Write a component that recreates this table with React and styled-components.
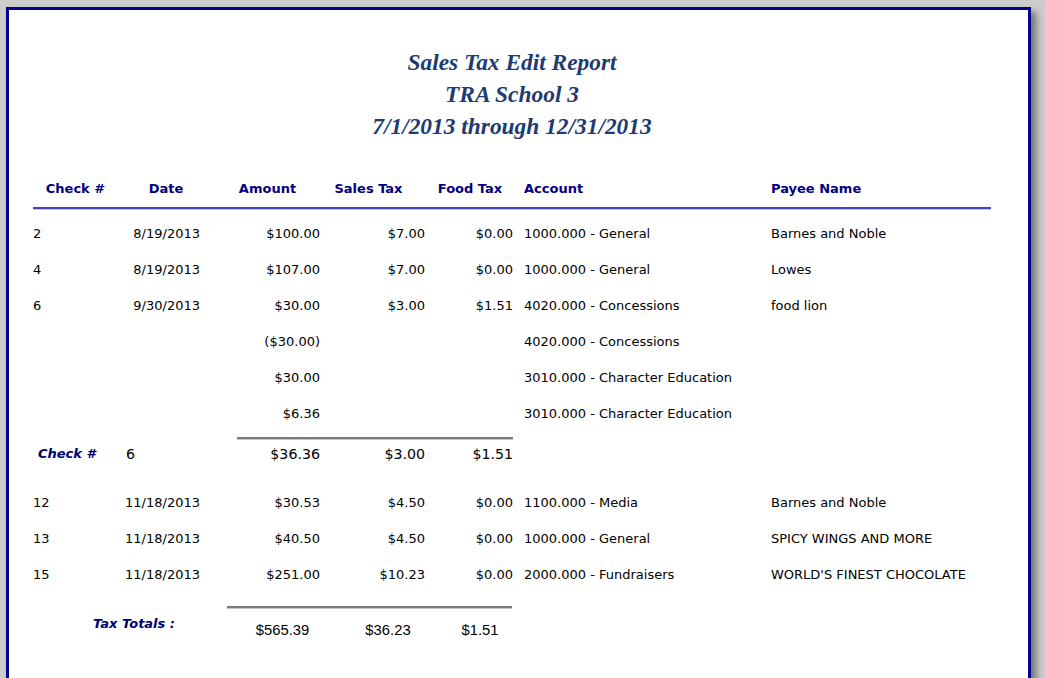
import React from 'react';
import styled, { createGlobalStyle } from 'styled-components';

const GlobalStyle = createGlobalStyle`
  html, body {
    margin: 0;
    padding: 0;
    background: #cccccc;
    overflow: hidden;
  }
`;

const Page = styled.div`
  margin: 7px 0 0 6px;
  width: 1019px;
  min-height: 720px;
  background: #ffffff;
  border: 3px solid #000090;
  box-shadow: 5px 5px 7px rgba(0, 0, 0, 0.45);
`;

const Sheet = styled.div`
  padding: 36px 37px 0 24px;
  font-family: 'DejaVu Sans', Tahoma, sans-serif;
  font-size: 13px;
  color: #000;
`;

const Title = styled.div`
  text-align: center;
  font-family: 'Liberation Serif', 'Times New Roman', serif;
  font-style: italic;
  font-weight: bold;
  font-size: 23.4px;
  line-height: 32px;
  color: #203a72;
`;

const HeaderRow = styled.div`
  display: grid;
  grid-template-columns: 85px 96px 107px 95px 108px 247px 1fr;
  margin-top: 34px;
  height: 25px;
  line-height: 25px;
  padding-bottom: 6px;
  border-bottom: 2px solid #4545c2;
  box-shadow: 0 1px 0 #c8c8ee;
`;

const HeadCell = styled.div`
  font-weight: bold;
  color: #000080;
  text-align: ${(p) => (p.$left ? 'left' : 'center')};
  white-space: nowrap;
`;

const Body = styled.div`
  margin-top: 7px;
`;

const Row = styled.div`
  display: grid;
  grid-template-columns: 77px 90px 120px 105px 88px 258px 1fr;
  height: 36px;
  line-height: 36px;
  white-space: nowrap;
`;

const Cell = styled.div`
  text-align: ${(p) => (p.$right ? 'right' : 'left')};
  padding-left: ${(p) => p.$indent || 0}px;
`;

const Rule = styled.div`
  margin-left: ${(p) => p.$left}px;
  width: ${(p) => p.$width}px;
  height: 2px;
  background: #7a7a7a;
  box-shadow: 0 1px 0 #c4c4c4;
  margin-top: ${(p) => p.$top}px;
`;

const SubRow = styled(Row)`
  height: 28px;
  line-height: 30px;
  font-size: 14.2px;
  margin-bottom: 18px;
`;

const Label = styled.div`
  font-weight: bold;
  font-style: italic;
  color: #000070;
  font-size: 13px;
  padding-left: ${(p) => p.$indent || 0}px;
`;

const TotalRow = styled.div`
  display: grid;
  grid-template-columns: 197px 105px 106px 78px;
  align-items: start;
  margin-top: 8px;
  line-height: 16px;
`;

const TotalValue = styled.div`
  font-family: 'Liberation Sans', Arial, sans-serif;
  font-size: 14.8px;
  text-align: center;
  padding-top: 6px;
`;

const lines = [
  ['2', '8/19/2013', '$100.00', '$7.00', '$0.00', '1000.000 - General', 'Barnes and Noble'],
  ['4', '8/19/2013', '$107.00', '$7.00', '$0.00', '1000.000 - General', 'Lowes'],
  ['6', '9/30/2013', '$30.00', '$3.00', '$1.51', '4020.000 - Concessions', 'food lion'],
  ['', '', '($30.00)', '', '', '4020.000 - Concessions', ''],
  ['', '', '$30.00', '', '', '3010.000 - Character Education', ''],
  ['', '', '$6.36', '', '', '3010.000 - Character Education', ''],
];

const later = [
  ['12', '11/18/2013', '$30.53', '$4.50', '$0.00', '1100.000 - Media', 'Barnes and Noble'],
  ['13', '11/18/2013', '$40.50', '$4.50', '$0.00', '1000.000 - General', 'SPICY WINGS AND MORE'],
  ['15', '11/18/2013', '$251.00', '$10.23', '$0.00', '2000.000 - Fundraisers', "WORLD'S FINEST CHOCOLATE"],
];

const DataRow = ({ r }) => (
  <Row>
    <Cell>{r[0]}</Cell>
    <Cell $right>{r[1]}</Cell>
    <Cell $right>{r[2]}</Cell>
    <Cell $right>{r[3]}</Cell>
    <Cell $right>{r[4]}</Cell>
    <Cell $indent={11}>{r[5]}</Cell>
    <Cell>{r[6]}</Cell>
  </Row>
);

export default function App() {
  return (
    <>
      <GlobalStyle />
      <Page>
        <Sheet>
          <Title>
            Sales Tax Edit Report
            <br />
            TRA School 3
            <br />
            7/1/2013 through 12/31/2013
          </Title>

          <HeaderRow>
            <HeadCell>Check #</HeadCell>
            <HeadCell>Date</HeadCell>
            <HeadCell>Amount</HeadCell>
            <HeadCell>Sales Tax</HeadCell>
            <HeadCell>Food Tax</HeadCell>
            <HeadCell $left>Account</HeadCell>
            <HeadCell $left>Payee Name</HeadCell>
          </HeaderRow>

          <Body>
            {lines.map((r, i) => (
              <DataRow key={i} r={r} />
            ))}

            <Rule $left={204} $width={276} $top={5} />
            <SubRow>
              <Label $indent={5}>Check #</Label>
              <Cell $indent={16}>6</Cell>
              <Cell $right>$36.36</Cell>
              <Cell $right>$3.00</Cell>
              <Cell $right>$1.51</Cell>
            </SubRow>

            {later.map((r, i) => (
              <DataRow key={i} r={r} />
            ))}

            <Rule $left={194} $width={285} $top={13} />
            <TotalRow>
              <Label $indent={60}>Tax Totals :</Label>
              <TotalValue>$565.39</TotalValue>
              <TotalValue>$36.23</TotalValue>
              <TotalValue>$1.51</TotalValue>
            </TotalRow>
          </Body>
        </Sheet>
      </Page>
    </>
  );
}
